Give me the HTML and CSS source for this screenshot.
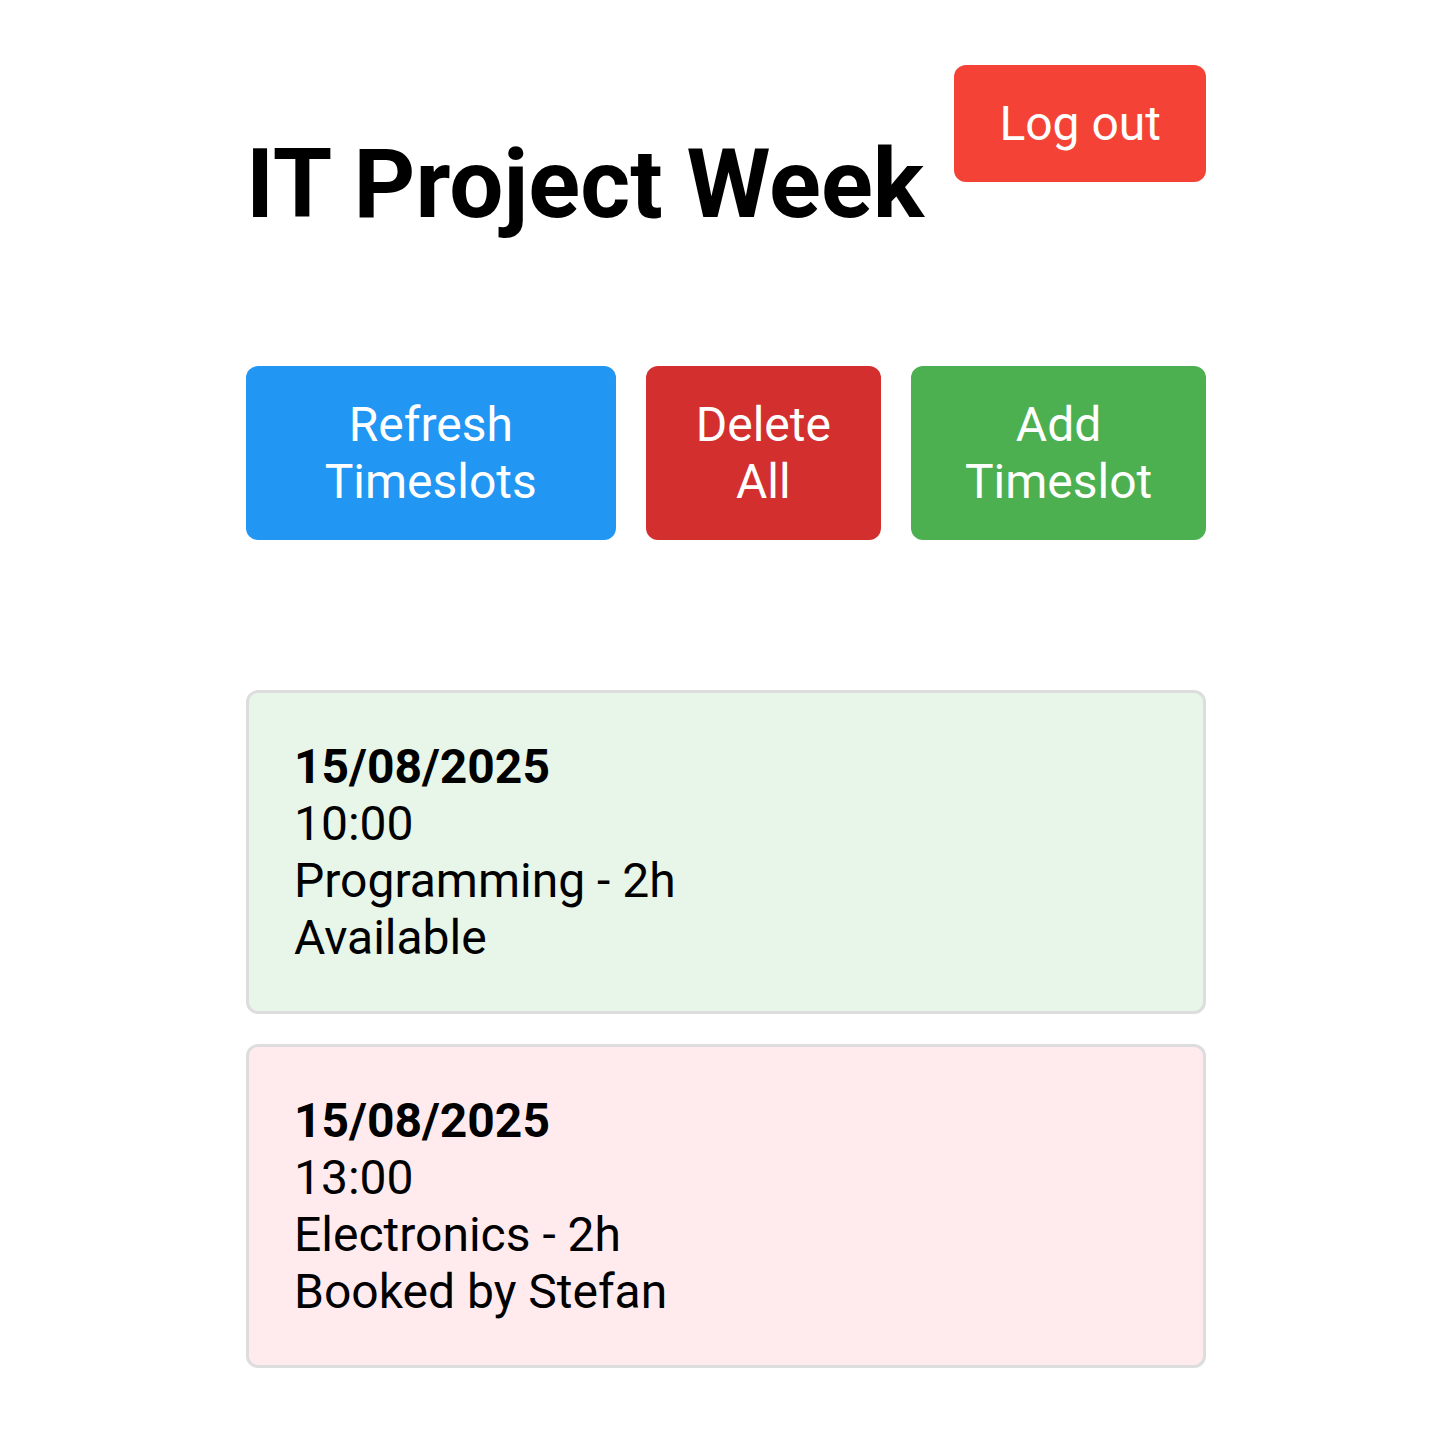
FILE: index.html
```html
<!DOCTYPE html>
<html lang="en">
<head>
<meta charset="utf-8">
<title>IT Project Week</title>
<link rel="stylesheet" href="styles.css">
</head>
<body>
<div class="page">
  <header class="header">
    <h1 class="title">IT Project Week</h1>
    <button class="btn btn-logout">Log out</button>
  </header>
  <div class="toolbar">
    <button class="btn btn-refresh">Refresh Timeslots</button>
    <button class="btn btn-delete">Delete All</button>
    <button class="btn btn-add">Add Timeslot</button>
  </div>
  <div class="slots">
    <div class="slot slot-available">
      <div class="slot-date">15/08/2025</div>
      <div>10:00</div>
      <div>Programming - 2h</div>
      <div>Available</div>
    </div>
    <div class="slot slot-booked">
      <div class="slot-date">15/08/2025</div>
      <div>13:00</div>
      <div>Electronics - 2h</div>
      <div>Booked by Stefan</div>
    </div>
  </div>
</div>
</body>
</html>
```
FILE: styles.css
```css
html, body {
  margin: 0;
  padding: 0;
  background: #ffffff;
}
body {
  font-family: Roboto, "Noto Sans", "Liberation Sans", sans-serif;
  font-size: 48px;
  line-height: 57px;
  color: #000;
  padding-right: 1px;
}
.page {
  width: 960px;
  margin: 0 auto;
  padding-top: 65px;
}
.header {
  display: flex;
  justify-content: space-between;
  align-items: flex-start;
}
.title {
  font-size: 96px;
  font-weight: 700;
  line-height: 112px;
  margin: 63px 0 64px;
}
.btn {
  font-family: inherit;
  font-size: 48px;
  line-height: 57px;
  color: #fff;
  border: none;
  border-radius: 12px;
  padding: 30px 45px;
  cursor: pointer;
  text-align: center;
}
.btn-logout { background: #f44336; }
.btn-refresh { background: #2196f3; }
.btn-delete { background: #d32f2f; }
.btn-add { background: #4caf50; }
.toolbar {
  display: flex;
  gap: 30px;
  margin-top: 62px;
}
.slots {
  margin-top: 150px;
  display: flex;
  flex-direction: column;
  gap: 30px;
}
.slot {
  border: 3px solid #dddddd;
  border-radius: 12px;
  padding: 45px;
}
.slot-available { background: #e8f5e9; }
.slot-booked { background: #ffebee; }
.slot-date { font-weight: 700; }
```
